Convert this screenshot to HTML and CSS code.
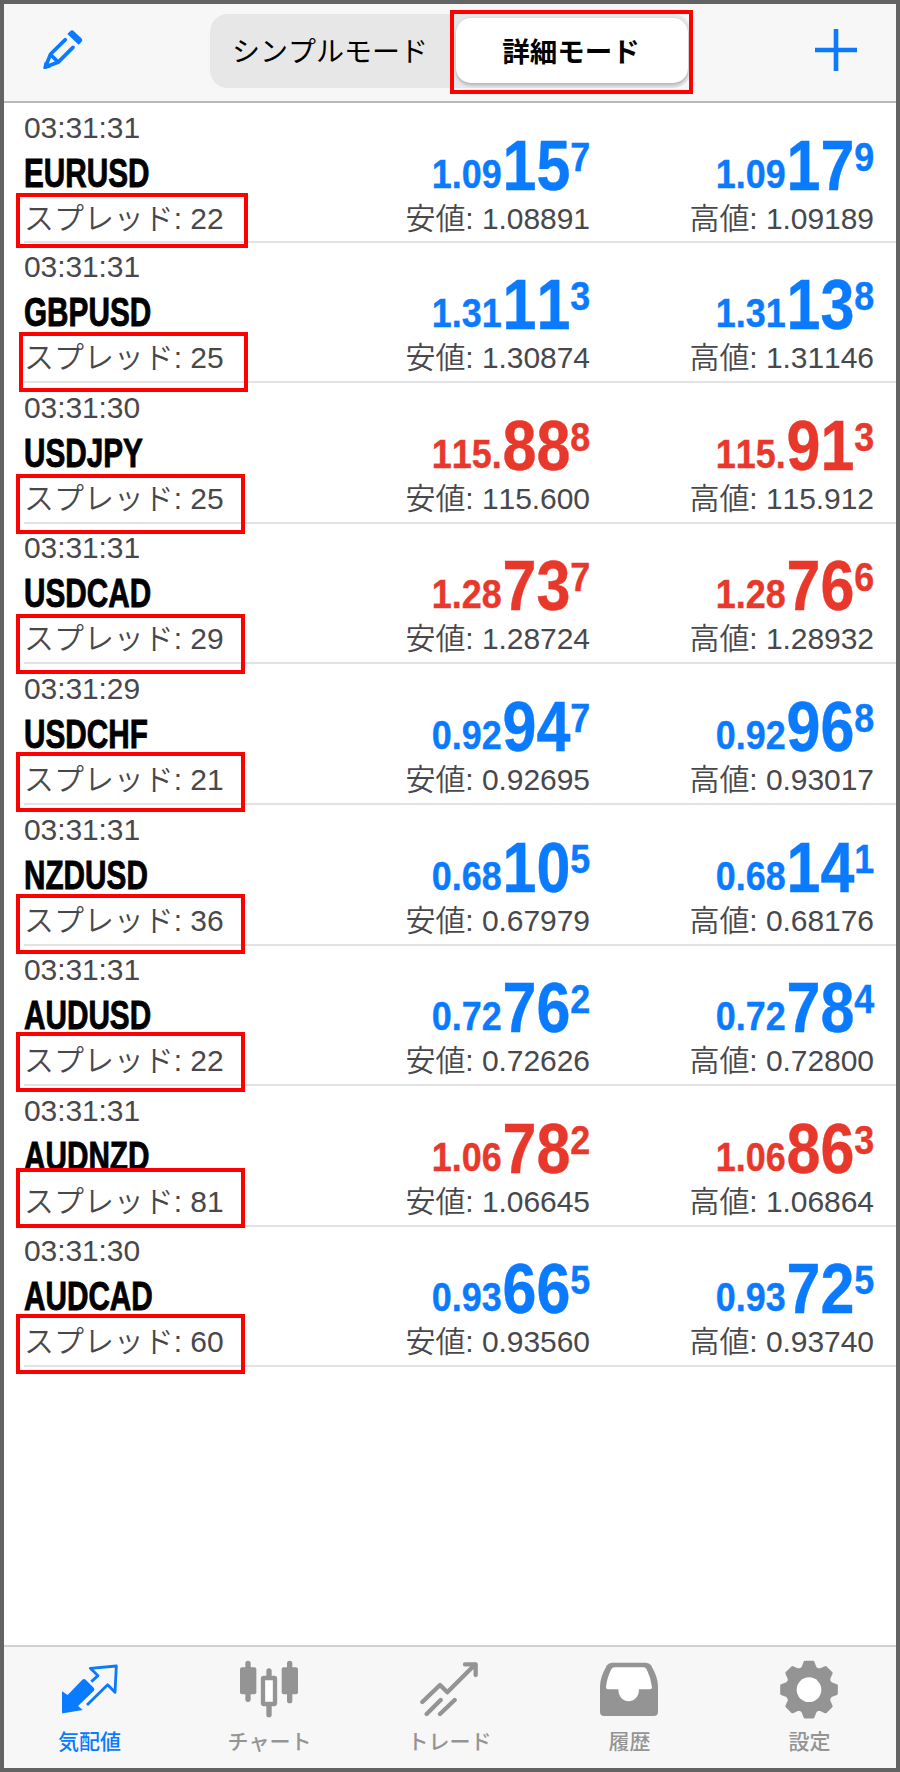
FILE: index.html
```html
<!DOCTYPE html>
<html lang="ja">
<head>
  <meta charset="UTF-8">
  <meta name="viewport" content="width=device-width, initial-scale=1.0">
  <title>気配値</title>
  <link rel="stylesheet" href="styles.css">
</head>
<body>
  <div class="app">
    <header class="header">
      <svg class="edit" viewBox="126 86 126 126">
        <path class="fill" d="M202 101 L211 92 Q216 88 221 92 L244 114 Q250 120 244 125 L236 133 Z"/>
        <path class="line" d="M196 118 L152 161 L136 200 L174 186 L219 141 M152 163 L174 185"/>
        <path class="fill" d="M130 206 L134 184 L152 202 Z"/>
      </svg>
      <div class="segment">
        <div class="segment-item">シンプルモード</div>
        <div class="segment-item active">詳細モード</div>
        <div class="mark mark-mode"></div>
      </div>
      <svg class="add" viewBox="0 0 42 42">
        <path d="M21 0 V42 M0 21 H42"/>
      </svg>
    </header>

    <main class="quotes">
      <div class="row">
        <div class="info">
          <div class="time">03:31:31</div>
          <div class="symbol"><span>EURUSD</span></div>
          <div class="sub">スプレッド: 22</div>
        </div>
        <div class="rate up">
          <div class="price"><span>1.09<b>15</b><i>7</i></span></div>
          <div class="sub">安値: 1.08891</div>
        </div>
        <div class="rate up">
          <div class="price"><span>1.09<b>17</b><i>9</i></span></div>
          <div class="sub">高値: 1.09189</div>
        </div>
        <div class="mark m1"></div>
      </div>
      <div class="row">
        <div class="info">
          <div class="time">03:31:31</div>
          <div class="symbol"><span>GBPUSD</span></div>
          <div class="sub">スプレッド: 25</div>
        </div>
        <div class="rate up">
          <div class="price"><span>1.31<b>11</b><i>3</i></span></div>
          <div class="sub">安値: 1.30874</div>
        </div>
        <div class="rate up">
          <div class="price"><span>1.31<b>13</b><i>8</i></span></div>
          <div class="sub">高値: 1.31146</div>
        </div>
        <div class="mark m2"></div>
      </div>
      <div class="row">
        <div class="info">
          <div class="time">03:31:30</div>
          <div class="symbol"><span>USDJPY</span></div>
          <div class="sub">スプレッド: 25</div>
        </div>
        <div class="rate down">
          <div class="price"><span>115.<b>88</b><i>8</i></span></div>
          <div class="sub">安値: 115.600</div>
        </div>
        <div class="rate down">
          <div class="price"><span>115.<b>91</b><i>3</i></span></div>
          <div class="sub">高値: 115.912</div>
        </div>
        <div class="mark m3"></div>
      </div>
      <div class="row">
        <div class="info">
          <div class="time">03:31:31</div>
          <div class="symbol"><span>USDCAD</span></div>
          <div class="sub">スプレッド: 29</div>
        </div>
        <div class="rate down">
          <div class="price"><span>1.28<b>73</b><i>7</i></span></div>
          <div class="sub">安値: 1.28724</div>
        </div>
        <div class="rate down">
          <div class="price"><span>1.28<b>76</b><i>6</i></span></div>
          <div class="sub">高値: 1.28932</div>
        </div>
        <div class="mark m4"></div>
      </div>
      <div class="row">
        <div class="info">
          <div class="time">03:31:29</div>
          <div class="symbol"><span>USDCHF</span></div>
          <div class="sub">スプレッド: 21</div>
        </div>
        <div class="rate up">
          <div class="price"><span>0.92<b>94</b><i>7</i></span></div>
          <div class="sub">安値: 0.92695</div>
        </div>
        <div class="rate up">
          <div class="price"><span>0.92<b>96</b><i>8</i></span></div>
          <div class="sub">高値: 0.93017</div>
        </div>
        <div class="mark m5"></div>
      </div>
      <div class="row">
        <div class="info">
          <div class="time">03:31:31</div>
          <div class="symbol"><span>NZDUSD</span></div>
          <div class="sub">スプレッド: 36</div>
        </div>
        <div class="rate up">
          <div class="price"><span>0.68<b>10</b><i>5</i></span></div>
          <div class="sub">安値: 0.67979</div>
        </div>
        <div class="rate up">
          <div class="price"><span>0.68<b>14</b><i>1</i></span></div>
          <div class="sub">高値: 0.68176</div>
        </div>
        <div class="mark m6"></div>
      </div>
      <div class="row">
        <div class="info">
          <div class="time">03:31:31</div>
          <div class="symbol"><span>AUDUSD</span></div>
          <div class="sub">スプレッド: 22</div>
        </div>
        <div class="rate up">
          <div class="price"><span>0.72<b>76</b><i>2</i></span></div>
          <div class="sub">安値: 0.72626</div>
        </div>
        <div class="rate up">
          <div class="price"><span>0.72<b>78</b><i>4</i></span></div>
          <div class="sub">高値: 0.72800</div>
        </div>
        <div class="mark m7"></div>
      </div>
      <div class="row">
        <div class="info">
          <div class="time">03:31:31</div>
          <div class="symbol"><span>AUDNZD</span></div>
          <div class="sub">スプレッド: 81</div>
        </div>
        <div class="rate down">
          <div class="price"><span>1.06<b>78</b><i>2</i></span></div>
          <div class="sub">安値: 1.06645</div>
        </div>
        <div class="rate down">
          <div class="price"><span>1.06<b>86</b><i>3</i></span></div>
          <div class="sub">高値: 1.06864</div>
        </div>
        <div class="mark m8"></div>
      </div>
      <div class="row">
        <div class="info">
          <div class="time">03:31:30</div>
          <div class="symbol"><span>AUDCAD</span></div>
          <div class="sub">スプレッド: 60</div>
        </div>
        <div class="rate up">
          <div class="price"><span>0.93<b>66</b><i>5</i></span></div>
          <div class="sub">安値: 0.93560</div>
        </div>
        <div class="rate up">
          <div class="price"><span>0.93<b>72</b><i>5</i></span></div>
          <div class="sub">高値: 0.93740</div>
        </div>
        <div class="mark m9"></div>
      </div>
    </main>

    <nav class="tabs">
      <div class="tab current">
        <svg viewBox="180 90 180 180">
          <path class="solid" d="M247 149 Q252 145 257 149 L281 173 Q286 178 281 183 L234 228 L248 240 L190 250 Q186 251 186 246 V184 L203 195 Z"/>
          <path class="outline thin" d="M274 155 L294 137 L271 115 L349 108 L345 187 L323 164 L261 225"/>
        </svg>
        <span>気配値</span>
      </div>
      <div class="tab">
        <svg viewBox="720 90 180 180">
          <rect class="solid" x="720" y="112" width="49" height="81" rx="6"/>
          <rect class="solid" x="845" y="112" width="49" height="81" rx="6"/>
          <path class="outline wick" d="M744 100 V208 M869 100 V212 M807 123 V140 M807 228 V254"/>
          <rect class="outline body" x="789" y="144" width="36" height="78" rx="2"/>
        </svg>
        <span>チャート</span>
      </div>
      <div class="tab">
        <svg viewBox="1260 90 180 180">
          <path class="outline" d="M1267 216 L1320 165 L1342 187 L1426 103 M1395 103 H1427 V135 M1280 252 L1322 210 M1320 252 L1364 210"/>
        </svg>
        <span>トレード</span>
      </div>
      <div class="tab">
        <svg viewBox="450 90 180 180">
          <path class="solid" fill-rule="evenodd" d="M486 98 H588 Q598 98 603 106 Q624 142 624 168 V245 Q624 258 611 258 H463 Q450 258 450 245 V168 Q450 142 471 106 Q476 98 486 98 Z"/>
          <path class="paper" d="M493 112 Q487 112 484 118 Q471 142 468 172 Q468 178 474 178 H505 C505 226 567 226 567 178 H600 Q606 178 606 172 Q602 142 590 118 Q587 112 581 112 Z"/>
        </svg>
        <span>履歴</span>
      </div>
      <div class="tab">
        <svg viewBox="990 90 180 180">
          <defs>
            <path id="tooth" d="M1065 97 H1089 L1095 113 L1106 124 H1048 L1059 113 Z"/>
          </defs>
          <g class="gear">
            <circle cx="1077" cy="179" r="64"/>
            <use href="#tooth"/>
            <use href="#tooth" transform="rotate(45 1077 179)"/>
            <use href="#tooth" transform="rotate(90 1077 179)"/>
            <use href="#tooth" transform="rotate(135 1077 179)"/>
            <use href="#tooth" transform="rotate(180 1077 179)"/>
            <use href="#tooth" transform="rotate(225 1077 179)"/>
            <use href="#tooth" transform="rotate(270 1077 179)"/>
            <use href="#tooth" transform="rotate(315 1077 179)"/>
          </g>
          <circle class="paper" cx="1077" cy="179" r="37"/>
        </svg>
        <span>設定</span>
      </div>
    </nav>
  </div>
</body>
</html>
```

FILE: styles.css
```css
* {
  margin: 0;
  padding: 0;
  box-sizing: border-box;
}

body {
  background-color: #fff;
  font-family: "Liberation Sans", "Noto Sans CJK JP", sans-serif;
  font-kerning: none;
  color: #48484c;
}

.app {
  display: flex;
  flex-direction: column;
  width: 900px;
  height: 1772px;
  border: 4px solid #636363;
  overflow: hidden;
}

/* ヘッダー */
.header {
  display: flex;
  align-items: flex-start;
  height: 99px;
  padding: 10px 39px 0 38px;
  background-color: #f7f7f7;
  border-bottom: 2px solid #b9b9bb;
}

.edit {
  width: 42px;
  height: 42px;
  margin-top: 15px;
}

.edit .fill {
  fill: #0a7aff;
}

.edit .line {
  fill: none;
  stroke: #0a7aff;
  stroke-width: 11;
  stroke-linejoin: round;
  stroke-linecap: round;
}

.segment {
  position: relative;
  display: flex;
  width: 481px;
  height: 74px;
  margin-left: 126px;
  padding: 4px 3px 5px 0;
  background-color: #e7e7e8;
  border-radius: 18px;
}

.segment-item {
  flex: 1;
  padding-right: 6px;
  font-family: "Noto Sans CJK JP", sans-serif;
  font-size: 28px;
  line-height: 65px;
  text-align: center;
  white-space: nowrap;
  color: #000;
}

.segment-item.active {
  flex: 0 0 232px;
  padding-right: 2px;
  background-color: #fff;
  border-radius: 15px;
  box-shadow: 0 3px 3px rgba(0, 0, 0, .16), 0 0 3px rgba(0, 0, 0, .1);
  font-size: 27.5px;
  font-weight: bold;
}

.add {
  width: 42px;
  height: 42px;
  margin: 15px 0 0 auto;
}

.add path {
  stroke: #0a7aff;
  stroke-width: 4.6;
}

/* 赤枠 */
.mark {
  position: absolute;
  left: -8px;
  width: 229px;
  height: 60px;
  border: 4px solid #f00;
}

.mark-mode {
  left: 240px;
  top: -4px;
  width: 243px;
  height: 84px;
}

.m1 { top: 90px; width: 232px; height: 55px; }
.m2 { top: 89.4px; left: -5px; }
.m3 { top: 90.8px; }
.m4 { top: 90.2px; }
.m5 { top: 87.6px; }
.m6 { top: 89px; }
.m7 { top: 86.4px; }
.m8 { top: 81.8px; }
.m9 { top: 87.2px; }

/* レート一覧 */
.quotes {
  flex: 1;
  padding-left: 20px;
}

.row {
  position: relative;
  display: flex;
  height: 140.6px;
  padding-top: 3.6px;
  border-bottom: 2px solid #e2e2e3;
}

.row:first-child {
  height: 139.6px;
}

.info {
  width: 282px;
}

.rate {
  width: 284px;
  text-align: right;
}

.time {
  font-size: 30px;
  line-height: 42px;
  letter-spacing: -.1px;
}

.symbol {
  height: 46px;
  margin-top: 1px;
  font-size: 41px;
  line-height: 46px;
  font-weight: bold;
  color: #000;
}

.symbol span {
  display: inline-block;
  transform: scaleX(.725);
  transform-origin: left;
  -webkit-text-stroke: .9px #000;
}

.sub {
  font-size: 30px;
  line-height: 45px;
  font-weight: 350;
  letter-spacing: -.05px;
  white-space: nowrap;
}

.price {
  height: 45px;
  margin-top: 44px;
  font-size: 41.5px;
  line-height: 45px;
  font-weight: bold;
}

.price span {
  display: inline-block;
  transform: scaleX(.865);
  transform-origin: right;
  -webkit-text-stroke: .4px currentColor;
}

.price b {
  margin-left: 1px;
  font-size: 70.5px;
  line-height: 0;
  vertical-align: -2px;
}

.price i {
  font-style: normal;
  line-height: 0;
  vertical-align: 17.2px;
}

.up .price {
  color: #0a7aff;
}

.down .price {
  color: #e8382b;
}

/* タブバー */
.tabs {
  display: flex;
  justify-content: center;
  height: 123px;
  padding-top: 13px;
  background-color: #f7f7f7;
  border-top: 2px solid #d0d0d0;
}

.tab {
  flex: 0 0 180px;
  display: flex;
  flex-direction: column;
  align-items: center;
  font-family: "Noto Sans CJK JP", sans-serif;
  font-size: 21px;
  line-height: 30px;
  font-weight: 500;
  color: #949494;
}

.tab.current {
  color: #0a7aff;
}

.tab svg {
  width: 60px;
  height: 60px;
  margin-bottom: 5px;
}

.tab span {
  margin-left: -1px;
}

.solid {
  fill: currentColor;
}

.outline {
  fill: none;
  stroke: currentColor;
  stroke-width: 13;
  stroke-linecap: round;
  stroke-linejoin: round;
}

.outline.thin {
  stroke-width: 8.5;
  stroke-linecap: butt;
}

.outline.wick {
  stroke-width: 16;
}

.outline.body,
.paper {
  fill: #fff;
}

.gear {
  fill: currentColor;
  stroke: currentColor;
  stroke-width: 9;
  stroke-linejoin: round;
}
```
